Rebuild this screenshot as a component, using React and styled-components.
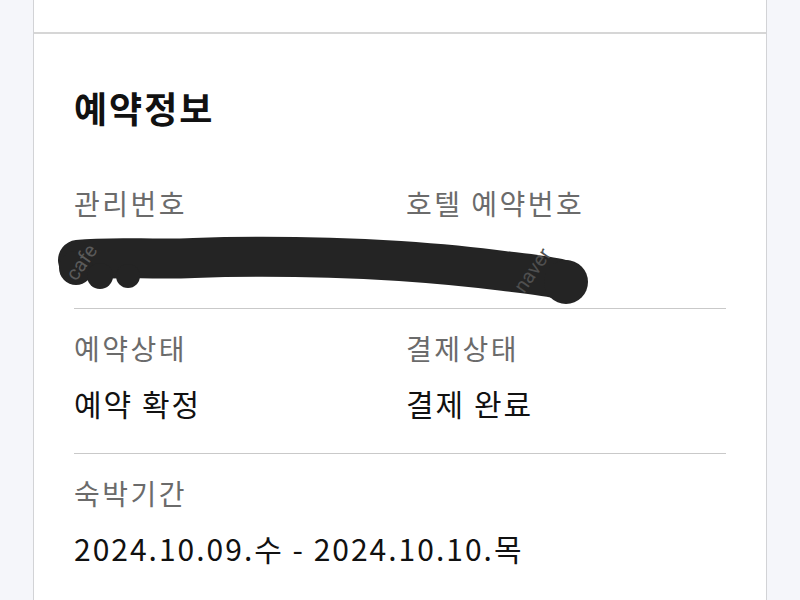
import React from "react";
import styled, { createGlobalStyle } from "styled-components";

const GlobalStyle = createGlobalStyle`
  html, body {
    margin: 0;
    padding: 0;
    background: #f5f6fa;
  }
  body {
    font-family: "Noto Sans CJK KR", "Noto Sans", sans-serif;
  }
`;

const Page = styled.div`
  width: 800px;
  height: 600px;
  overflow: hidden;
  background: #f5f6fa;
  display: flex;
  justify-content: center;
`;

const Column = styled.div`
  width: 732px;
  background: #ffffff;
  border-left: 1px solid #d2d3d6;
  border-right: 1px solid #d2d3d6;
  display: flex;
  flex-direction: column;
`;

const TopBlock = styled.div`
  height: 32px;
  flex-shrink: 0;
  border-bottom: 2px solid #d6d6d6;
`;

const InfoCard = styled.section`
  padding: 49px 40px 0 40px;
`;

const Title = styled.h2`
  margin: 0 0 32px 0;
  font-size: 36px;
  line-height: 48px;
  font-weight: 700;
  color: #111111;
  letter-spacing: 2px;
`;

const Row = styled.div`
  position: relative;
  display: grid;
  grid-template-columns: ${(props) => (props.single ? "1fr" : "332px 1fr")};
  padding: ${(props) => (props.first ? "20px" : "19px")} 0 30px 0;
  border-bottom: ${(props) => (props.last ? "none" : "1px solid #c9c9c9")};
`;

const Field = styled.div`
  display: flex;
  flex-direction: column;
  gap: 15px;
`;

const Label = styled.div`
  font-size: 28px;
  line-height: 40px;
  color: #6b6b6b;
  white-space: nowrap;
  letter-spacing: 2.5px;
`;

const Value = styled.div`
  font-size: 30px;
  line-height: 40px;
  color: #111111;
  white-space: nowrap;
  min-height: 40px;
  letter-spacing: 2px;
`;

const Redaction = styled.svg`
  position: absolute;
  left: -20px;
  top: 71px;
  width: 540px;
  height: 72px;
  pointer-events: none;
`;

const Scribble = () => (
  <Redaction viewBox="0 0 540 72">
    <path
      d="M24 26 C 60 22, 96 26, 140 24 C 196 22, 260 22, 346 27 C 390 30, 420 33, 450 37 C 475 40, 495 42, 510 46"
      stroke="#242424"
      strokeWidth="40"
      strokeLinecap="round"
      fill="none"
    />
    <circle cx="22" cy="34" r="17" fill="#242424" />
    <circle cx="46" cy="42" r="13" fill="#242424" />
    <circle cx="74" cy="42" r="12" fill="#242424" />
    <circle cx="512" cy="48" r="22" fill="#242424" />
    <text x="22" y="48" fill="#5a5a5a" fontSize="20" transform="rotate(-55 22 48)" fontFamily="Roboto, sans-serif">
      cafe
    </text>
    <text x="470" y="60" fill="#4f4f4f" fontSize="20" transform="rotate(-55 470 60)" fontFamily="Roboto, sans-serif">
      naver
    </text>
  </Redaction>
);

export default function App() {
  return (
    <>
      <GlobalStyle />
      <Page>
        <Column>
          <TopBlock />
          <InfoCard>
            <Title>예약정보</Title>
            <Row first>
              <Field>
                <Label>관리번호</Label>
                <Value />
              </Field>
              <Field>
                <Label>호텔 예약번호</Label>
                <Value />
              </Field>
              <Scribble />
            </Row>
            <Row>
              <Field>
                <Label>예약상태</Label>
                <Value>예약 확정</Value>
              </Field>
              <Field>
                <Label>결제상태</Label>
                <Value>결제 완료</Value>
              </Field>
            </Row>
            <Row single last>
              <Field>
                <Label>숙박기간</Label>
                <Value>2024.10.09.수 - 2024.10.10.목</Value>
              </Field>
            </Row>
          </InfoCard>
        </Column>
      </Page>
    </>
  );
}
